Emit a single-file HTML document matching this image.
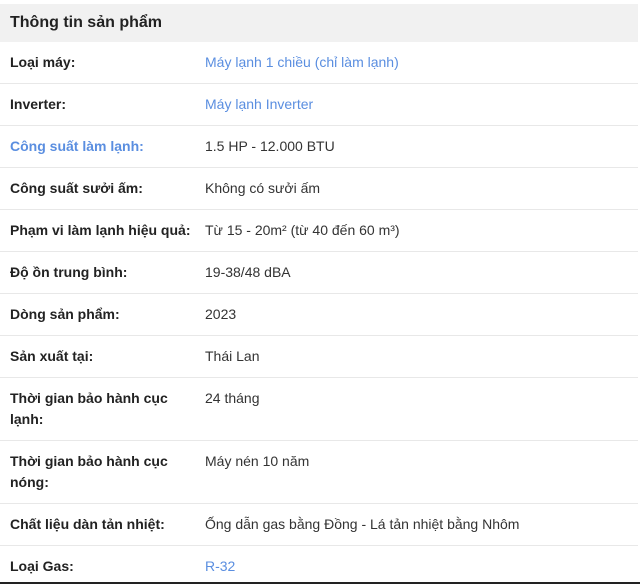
<!DOCTYPE html>
<html><head><meta charset="utf-8"><style>
body{margin:0;background:#fff;width:640px;height:584px;overflow:hidden;font-family:"Liberation Sans",Arial,sans-serif;color:#333;}
.h{position:absolute;top:4px;left:0;width:638px;height:38px;background:#f1f1f1;font-size:16px;font-weight:bold;line-height:38px;padding-left:10px;box-sizing:border-box;color:#222}
table{position:absolute;top:42px;left:0;width:638px;border-collapse:collapse;font-size:14px;line-height:21px}
td{padding:10px 0 10px 10px;vertical-align:top;border-bottom:1px solid #e8e8e8}
td.l{width:185px;font-weight:bold;color:#222}
td.b{color:#5a8ee0}
tr:last-child td{border-bottom:none}
.bot{position:absolute;left:0;top:582px;width:640px;height:2px;background:#222}
</style></head><body>
<div class="h">Thông tin sản phẩm</div>
<table>
<tr><td class="l">Loại máy:</td><td class="b">Máy lạnh 1 chiều (chỉ làm lạnh)</td></tr>
<tr><td class="l">Inverter:</td><td class="b">Máy lạnh Inverter</td></tr>
<tr><td class="l b">Công suất làm lạnh:</td><td>1.5 HP - 12.000 BTU</td></tr>
<tr><td class="l">Công suất sưởi ấm:</td><td>Không có sưởi ấm</td></tr>
<tr><td class="l">Phạm vi làm lạnh hiệu quả:</td><td>Từ 15 - 20m² (từ 40 đến 60 m³)</td></tr>
<tr><td class="l">Độ ồn trung bình:</td><td>19-38/48 dBA</td></tr>
<tr><td class="l">Dòng sản phẩm:</td><td>2023</td></tr>
<tr><td class="l">Sản xuất tại:</td><td>Thái Lan</td></tr>
<tr><td class="l">Thời gian bảo hành cục lạnh:</td><td>24 tháng</td></tr>
<tr><td class="l">Thời gian bảo hành cục nóng:</td><td>Máy nén 10 năm</td></tr>
<tr><td class="l">Chất liệu dàn tản nhiệt:</td><td>Ống dẫn gas bằng Đồng - Lá tản nhiệt bằng Nhôm</td></tr>
<tr><td class="l">Loại Gas:</td><td class="b">R-32</td></tr>
</table>
<div class="bot"></div>
</body></html>
